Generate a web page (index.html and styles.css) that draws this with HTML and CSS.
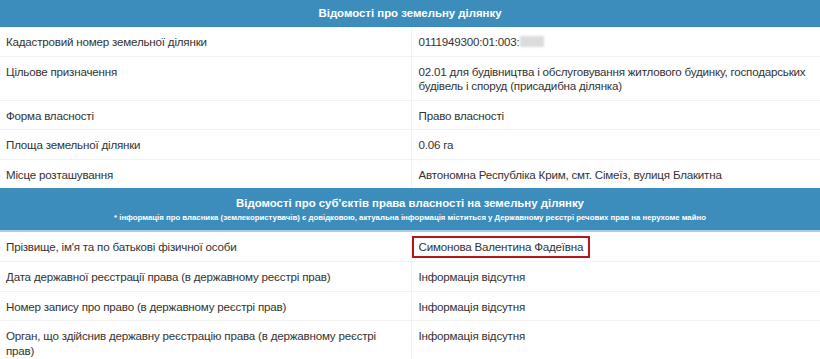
FILE: index.html
```html
<!DOCTYPE html>
<html lang="uk">
<head>
<meta charset="utf-8">
<title>Відомості про земельну ділянку</title>
<link rel="stylesheet" href="styles.css">
</head>
<body>
<table class="info">
  <colgroup><col class="col-label"><col class="col-value"></colgroup>
  <tr class="head"><th colspan="2">Відомості про земельну ділянку</th></tr>
  <tr><td>Кадастровий номер земельної ділянки</td><td>0111949300:01:003:<span class="blur"></span></td></tr>
  <tr><td>Цільове призначення</td><td>02.01 для будівництва і обслуговування житлового будинку, господарських будівель і споруд (присадибна ділянка)</td></tr>
  <tr><td>Форма власності</td><td>Право власності</td></tr>
  <tr><td>Площа земельної ділянки</td><td>0.06 га</td></tr>
  <tr><td>Місце розташування</td><td>Автономна Республіка Крим, смт. Сімеїз, вулиця Блакитна</td></tr>
  <tr class="head head2"><th colspan="2"><div class="title">Відомості про суб'єктів права власності на земельну ділянку</div><div class="note">* інформація про власника (землекористувачів) є довідковою, актуальна інформація міститься у Державному реєстрі речових прав на нерухоме майно</div></th></tr>
  <tr><td>Прізвище, ім'я та по батькові фізичної особи</td><td class="boxed"><span class="mark">Симонова Валентина Фадеївна</span></td></tr>
  <tr><td>Дата державної реєстрації права (в державному реєстрі прав)</td><td>Інформація відсутня</td></tr>
  <tr><td>Номер запису про право (в державному реєстрі прав)</td><td>Інформація відсутня</td></tr>
  <tr><td>Орган, що здійснив державну реєстрацію права (в державному реєстрі прав)</td><td>Інформація відсутня</td></tr>
</table>
</body>
</html>
```
FILE: styles.css
```css
html, body {
  margin: 0;
  padding: 0;
  background: #fff;
}
body {
  font-family: "Liberation Sans", Arial, sans-serif;
  font-size: 11.6px;
  letter-spacing: -0.2px;
  color: #333;
}
.info {
  width: 820px;
  border-collapse: collapse;
  table-layout: fixed;
}
.col-label { width: 411px; }
.info td {
  padding: 8px 20px 6px 6px;
  line-height: 14.5px;
  vertical-align: top;
  border-top: 1px solid #f2f2f2;
}
.info td + td {
  border-left: 1px solid #f2f2f2;
  padding-left: 7px;
  padding-right: 8px;
}
.head th {
  background: #3c8dbc;
  color: #fff;
  font-weight: bold;
  font-size: 11.4px;
  letter-spacing: 0;
  text-align: center;
  padding: 6px 6px;
  line-height: 14px;
  border-bottom: 1px solid #3a86b4;
}
.head2 th {
  padding: 8px 6px 7px;
  border-bottom: 2px solid #a8cde4;
}
.head2 .title {
  line-height: 14px;
}
.head2 .note {
  font-size: 7.8px;
  line-height: 11px;
  margin-top: 2px;
}
.blur {
  display: inline-block;
  width: 24px;
  height: 11px;
  background: #dcdcdc;
  vertical-align: -1px;
  filter: blur(1px);
}
.info td.boxed {
  padding-top: 4px;
  padding-bottom: 3px;
  padding-left: 0;
}
.mark {
  display: block;
  width: max-content;
  border: 2px solid #b8151b;
  padding: 2px 5px;
  line-height: 14px;
}
```
